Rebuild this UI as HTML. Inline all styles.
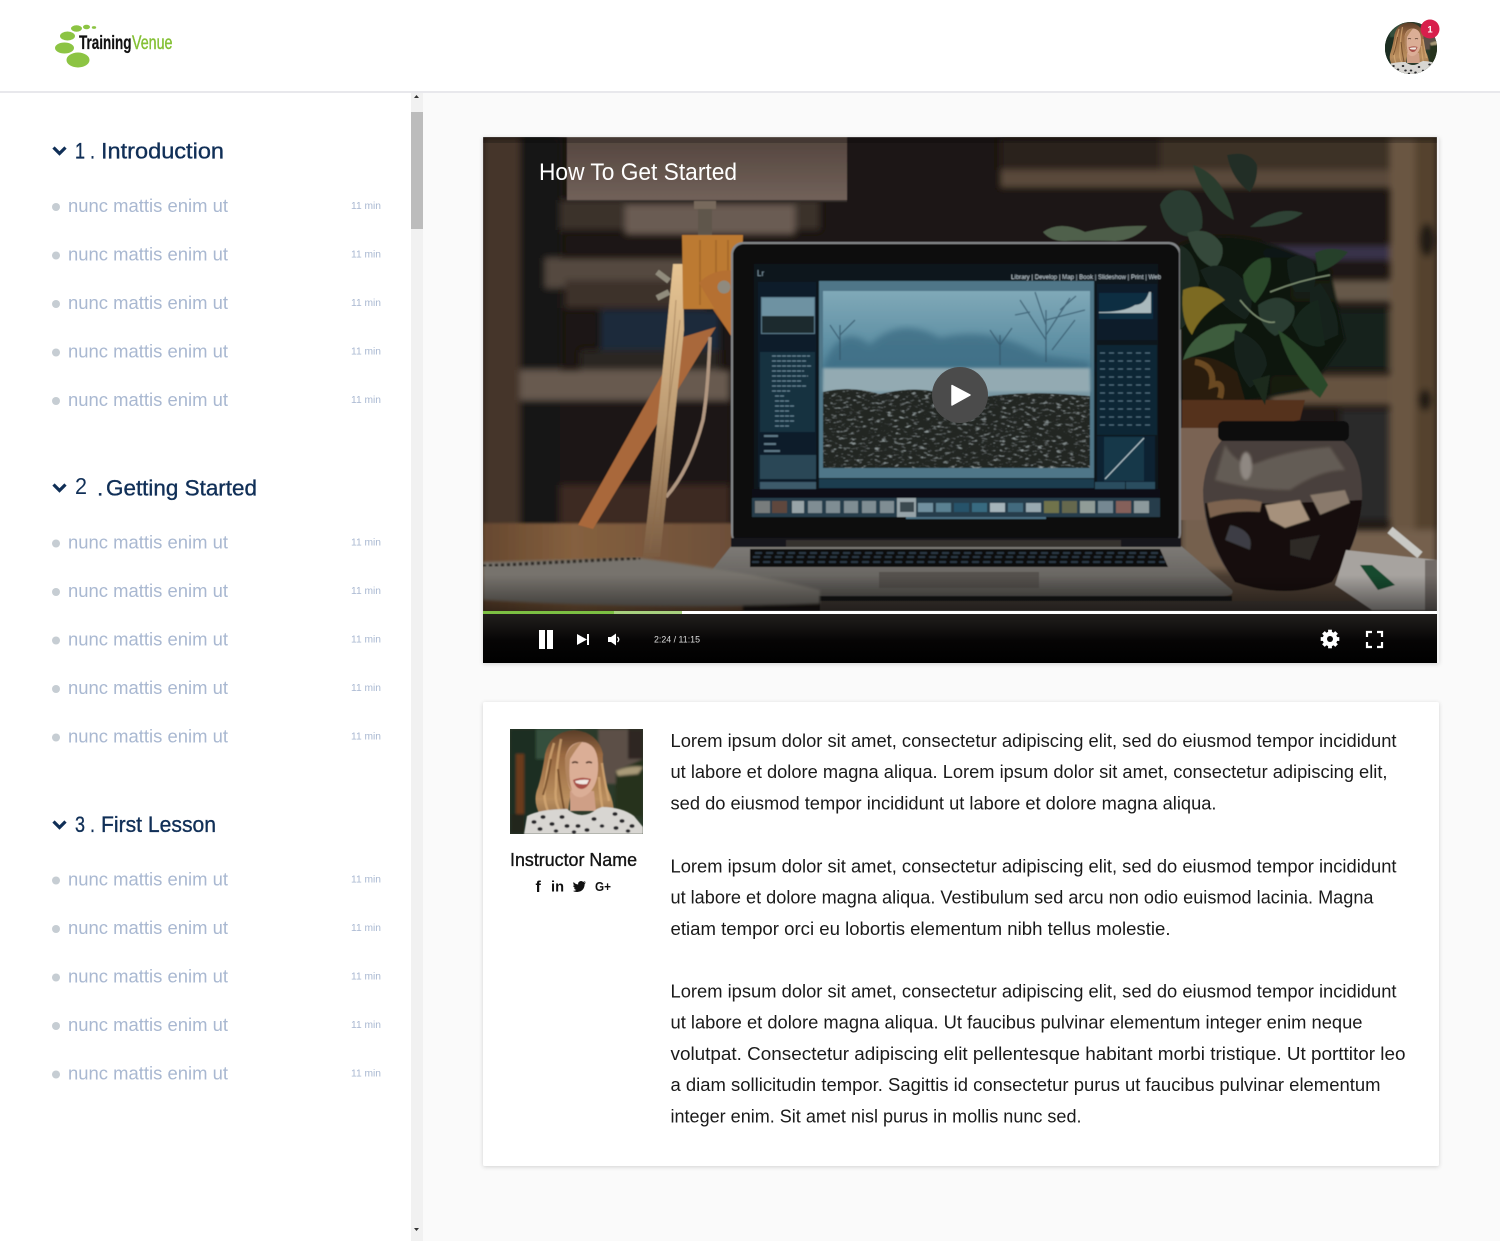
<!DOCTYPE html>
<html lang="en"><head><meta charset="utf-8"><title>TrainingVenue</title>
<style>
html,body{margin:0;padding:0;background:#fff;width:1500px;height:1241px;overflow:hidden}
svg{display:block}
text{font-family:"Liberation Sans",sans-serif}
.li{font-size:18px;fill:#a9b8d1}
.mi{font-size:10px;fill:#a9b8d1}
.h{font-size:22.5px;fill:#102f57;stroke:#102f57;stroke-width:.35}
.p{font-size:18px;fill:#1a1a1a}
</style></head><body>
<svg width="1500" height="1241" viewBox="0 0 1500 1241" xmlns="http://www.w3.org/2000/svg">
<defs>
<filter id="b1" x="-10%" y="-10%" width="120%" height="120%"><feGaussianBlur stdDeviation="3.5"/></filter>
<filter id="b2" x="-10%" y="-10%" width="120%" height="120%"><feGaussianBlur stdDeviation="1.2"/></filter>
<filter id="b3" x="-5%" y="-5%" width="110%" height="110%"><feGaussianBlur stdDeviation=".5"/></filter>
<filter id="sh" x="-3%" y="-3%" width="106%" height="106%"><feDropShadow dx="0" dy="1" stdDeviation="2" flood-color="#000" flood-opacity=".16"/></filter>
<filter id="grass" x="0" y="0" width="1" height="1" color-interpolation-filters="sRGB">
<feTurbulence type="fractalNoise" baseFrequency=".16 .42" numOctaves="4" seed="7" result="n"/>
<feColorMatrix in="n" values="0 0 0 0 .56 0 0 0 0 .6 0 0 0 0 .6 4.5 0 0 0 -2.6" result="c"/>
<feMerge result="m"><feMergeNode in="SourceGraphic"/><feMergeNode in="c"/></feMerge>
<feComposite in="m" in2="SourceAlpha" operator="in"/>
</filter>
<linearGradient id="lamp" x1="0" y1="0" x2="0" y2="1"><stop offset="0" stop-color="#54453e"/><stop offset="1" stop-color="#72625a"/></linearGradient>
<linearGradient id="desk" x1="0" y1="0" x2="1" y2="0"><stop offset="0" stop-color="#66482f"/><stop offset=".35" stop-color="#85603f"/><stop offset="1" stop-color="#6b4e39"/></linearGradient>
<linearGradient id="leg" x1="0" y1="0" x2="0" y2="1"><stop offset="0" stop-color="#e6c493"/><stop offset=".55" stop-color="#bb9a72"/><stop offset="1" stop-color="#7a5c42"/></linearGradient>
<linearGradient id="sky" x1="0" y1="0" x2="0" y2="1"><stop offset="0" stop-color="#80a9b8"/><stop offset=".3" stop-color="#5f90a4"/><stop offset=".48" stop-color="#4f8197"/><stop offset=".6" stop-color="#7f9ba5"/><stop offset="1" stop-color="#7f9ba5"/></linearGradient>
<linearGradient id="fade" x1="0" y1="0" x2="0" y2="1"><stop offset="0" stop-color="#000" stop-opacity="0"/><stop offset="1" stop-color="#000" stop-opacity=".5"/></linearGradient>
<linearGradient id="bar" x1="0" y1="0" x2="0" y2="1"><stop offset="0" stop-color="#221f1d"/><stop offset=".55" stop-color="#060505"/><stop offset="1" stop-color="#000"/></linearGradient>
<linearGradient id="base" x1="0" y1="0" x2="0" y2="1"><stop offset="0" stop-color="#7e7b77"/><stop offset="1" stop-color="#5c5955"/></linearGradient>
<linearGradient id="hair" x1="0" y1="0" x2="0" y2="1"><stop offset="0" stop-color="#5a3d28"/><stop offset=".25" stop-color="#9a6a42"/><stop offset=".7" stop-color="#b98e5e"/><stop offset="1" stop-color="#836244"/></linearGradient>
<clipPath id="vid"><rect x="483" y="137" width="954" height="474"/></clipPath>
<clipPath id="av"><circle cx="1411" cy="48" r="26"/></clipPath>
<clipPath id="inst"><rect x="0" y="0" width="133" height="105"/></clipPath>
<g id="portrait" clip-path="url(#inst)">
<rect width="133" height="105" fill="#2b3a2a"/>
<g filter="url(#b2)">
<rect x="0" y="0" width="40" height="105" fill="#1c2f22"/>
<rect x="6" y="25" width="8" height="60" fill="#6a3a1c"/>
<rect x="26" y="0" width="40" height="30" fill="#34503c"/>
<rect x="88" y="0" width="45" height="55" fill="#5b5046"/>
<rect x="118" y="0" width="15" height="30" fill="#2e2823"/>
<path d="M106 42 L133 30 V88 H105Z" fill="#28331f"/>
<path d="M106 42 Q120 36 133 38 L128 45 Q116 46 108 47Z" fill="#a99a78"/>
<rect x="0" y="85" width="14" height="20" fill="#20281c"/>
</g>
<g filter="url(#b3)">
<path d="M64 1 Q40 3 35 25 Q32 45 28 58 Q22 72 30 86 L58 84 L60 68 L84 68 L88 100 L103 100 Q107 78 98 60 Q92 40 93 25 Q88 3 64 1Z" fill="url(#hair)"/>
<path d="M44 14 Q38 34 36 52 Q32 68 38 82 M51 10 Q46 36 46 58 Q44 72 50 82 M92 34 Q95 54 99 72 M89 48 Q90 70 95 92" stroke="#d8ad78" stroke-width="2.500" fill="none" opacity=".7"/>
<path d="M41 30 Q38 50 33 66 M48 40 Q50 60 54 80" stroke="#6e4726" stroke-width="2" fill="none" opacity=".8"/>
<path d="M60 62 L84 62 L86 82 L60 82Z" fill="#cf9f86"/>
<path d="M14 105 L17 87 Q30 80 57 80 Q72 92 87 80 L92 78 Q112 78 124 87 L133 98 V105Z" fill="#d8d6d2"/>
<g fill="#26272a"><ellipse cx="24" cy="93" rx="2.600" ry="1.900"/><ellipse cx="33" cy="88" rx="2.600" ry="1.900"/><ellipse cx="42" cy="95" rx="2.600" ry="1.900"/><ellipse cx="30" cy="100" rx="2.600" ry="1.900"/><ellipse cx="52" cy="88" rx="2.600" ry="1.900"/><ellipse cx="57" cy="97" rx="2.600" ry="1.900"/><ellipse cx="68" cy="97" rx="2.600" ry="1.900"/><ellipse cx="46" cy="102" rx="2.300" ry="1.800"/><ellipse cx="84" cy="90" rx="2.600" ry="1.900"/><ellipse cx="77" cy="101" rx="2.600" ry="1.900"/><ellipse cx="105" cy="85" rx="2.600" ry="1.900"/><ellipse cx="112" cy="92" rx="2.600" ry="1.900"/><ellipse cx="106" cy="99" rx="2.600" ry="1.900"/><ellipse cx="122" cy="97" rx="2.600" ry="1.900"/><ellipse cx="64" cy="103" rx="2.300" ry="1.800"/><ellipse cx="118" cy="102" rx="2.300" ry="1.800"/><ellipse cx="92" cy="97" rx="2.300" ry="1.800"/></g>
<path d="M55 30 Q58 13 72 13 Q87 14 88 34 Q89 52 81 62 Q72 72 64 66 Q55 56 55 30Z" fill="#dbae96"/>
<path d="M55 30 Q59 14 72 13 Q66 20 60 30 Q58 48 62 62 Q54 50 55 30Z" fill="#a87a50" opacity=".8"/>
<path d="M63 51 Q72 47 81 50 Q78 60 71 60 Q65 59 63 51Z" fill="#a85046"/>
<path d="M65 52 Q72 50 79 51 L77 55 Q71 56 66 54Z" fill="#f0e8e2"/>
<path d="M62 34 Q65 32 68 34 M76 34 Q79 32 82 34" stroke="#5d4032" stroke-width="1.600" fill="none"/>
</g>
</g>
</defs>

<!-- page -->
<rect width="1500" height="1241" fill="#fff"/>
<rect x="423" y="92" width="1077" height="1149" fill="#fafafa"/>
<rect x="0" y="91" width="1500" height="2" fill="#e8e8ec"/>

<!-- logo -->
<g fill="#8cc443">
<ellipse cx="78" cy="60" rx="11.500" ry="7.500"/>
<ellipse cx="64.500" cy="48" rx="9.500" ry="5.500"/>
<ellipse cx="67.500" cy="36" rx="7.500" ry="4.500"/>
<ellipse cx="76.500" cy="28.500" rx="5.500" ry="3.200"/>
<ellipse cx="86.500" cy="27" rx="3.500" ry="2.300"/>
<ellipse cx="94" cy="27.500" rx="2.200" ry="1.400"/>
</g>
<text x="79" y="49" font-size="19.500" font-weight="700" fill="#111" textLength="52.500" lengthAdjust="spacingAndGlyphs" stroke="#111" stroke-width=".2">Training</text>
<text x="132" y="49" font-size="19.500" fill="#84c034" stroke="#84c034" stroke-width=".4" textLength="40.500" lengthAdjust="spacingAndGlyphs">Venue</text>

<!-- avatar -->
<g clip-path="url(#av)"><rect x="1385" y="22" width="52" height="52" fill="#2b3a2a"/><use href="#portrait" transform="translate(1377 22) scale(.5)"/></g>
<circle cx="1430" cy="29" r="9.500" fill="#d81f4c"/>
<text x="1430" y="32.500" font-size="9.500" font-weight="700" fill="#fff" text-anchor="middle">1</text>

<!-- scrollbar -->
<rect x="411" y="93" width="12" height="1148" fill="#f1f1f1"/>
<rect x="411" y="112" width="12" height="117" fill="#bcbcbc"/>
<path d="M414 98 L416.500 95 L419 98Z" fill="#333"/>
<path d="M414 1228 L416.500 1231 L419 1228Z" fill="#333"/>

<!-- sidebar section 1 -->
<path d="M53.500 147.500 L59.500 153.500 L65.500 147.500" stroke="#102f57" stroke-width="3.200" fill="none"/>
<text class="h" x="75" y="158.500" textLength="20" lengthAdjust="spacingAndGlyphs">1 .</text>
<text class="h" x="101" y="158.500" textLength="123" lengthAdjust="spacingAndGlyphs">Introduction</text>
<g fill="#c6cdd3"><circle cx="56" cy="207" r="4"/><circle cx="56" cy="255.500" r="4"/><circle cx="56" cy="304" r="4"/><circle cx="56" cy="352.500" r="4"/><circle cx="56" cy="401" r="4"/></g>
<text class="li" x="68" y="212" textLength="160" lengthAdjust="spacingAndGlyphs">nunc mattis enim ut</text>
<text class="li" x="68" y="260.500" textLength="160" lengthAdjust="spacingAndGlyphs">nunc mattis enim ut</text>
<text class="li" x="68" y="309" textLength="160" lengthAdjust="spacingAndGlyphs">nunc mattis enim ut</text>
<text class="li" x="68" y="357.500" textLength="160" lengthAdjust="spacingAndGlyphs">nunc mattis enim ut</text>
<text class="li" x="68" y="406" textLength="160" lengthAdjust="spacingAndGlyphs">nunc mattis enim ut</text>
<text class="mi" x="351" y="209" textLength="30" lengthAdjust="spacingAndGlyphs">11 min</text>
<text class="mi" x="351" y="257.500" textLength="30" lengthAdjust="spacingAndGlyphs">11 min</text>
<text class="mi" x="351" y="306" textLength="30" lengthAdjust="spacingAndGlyphs">11 min</text>
<text class="mi" x="351" y="354.500" textLength="30" lengthAdjust="spacingAndGlyphs">11 min</text>
<text class="mi" x="351" y="403" textLength="30" lengthAdjust="spacingAndGlyphs">11 min</text>

<!-- sidebar section 2 -->
<path d="M53.500 484.500 L59.500 490.500 L65.500 484.500" stroke="#102f57" stroke-width="3.200" fill="none"/>
<text x="75" y="494" font-size="23" fill="#102f57" textLength="12" lengthAdjust="spacingAndGlyphs">2</text>
<text class="h" x="97" y="495.500" textLength="5">.</text>
<text class="h" x="106" y="495.500" textLength="151" lengthAdjust="spacingAndGlyphs">Getting Started</text>
<g fill="#c6cdd3"><circle cx="56" cy="543.500" r="4"/><circle cx="56" cy="592" r="4"/><circle cx="56" cy="640.500" r="4"/><circle cx="56" cy="689" r="4"/><circle cx="56" cy="737.500" r="4"/></g>
<text class="li" x="68" y="548.500" textLength="160" lengthAdjust="spacingAndGlyphs">nunc mattis enim ut</text>
<text class="li" x="68" y="597" textLength="160" lengthAdjust="spacingAndGlyphs">nunc mattis enim ut</text>
<text class="li" x="68" y="645.500" textLength="160" lengthAdjust="spacingAndGlyphs">nunc mattis enim ut</text>
<text class="li" x="68" y="694" textLength="160" lengthAdjust="spacingAndGlyphs">nunc mattis enim ut</text>
<text class="li" x="68" y="742.500" textLength="160" lengthAdjust="spacingAndGlyphs">nunc mattis enim ut</text>
<text class="mi" x="351" y="545.500" textLength="30" lengthAdjust="spacingAndGlyphs">11 min</text>
<text class="mi" x="351" y="594" textLength="30" lengthAdjust="spacingAndGlyphs">11 min</text>
<text class="mi" x="351" y="642.500" textLength="30" lengthAdjust="spacingAndGlyphs">11 min</text>
<text class="mi" x="351" y="691" textLength="30" lengthAdjust="spacingAndGlyphs">11 min</text>
<text class="mi" x="351" y="739.500" textLength="30" lengthAdjust="spacingAndGlyphs">11 min</text>

<!-- sidebar section 3 -->
<path d="M53.500 821.500 L59.500 827.500 L65.500 821.500" stroke="#102f57" stroke-width="3.200" fill="none"/>
<text class="h" x="75" y="832" textLength="20" lengthAdjust="spacingAndGlyphs">3 .</text>
<text class="h" x="101" y="832" textLength="115" lengthAdjust="spacingAndGlyphs">First Lesson</text>
<g fill="#c6cdd3"><circle cx="56" cy="880.500" r="4"/><circle cx="56" cy="929" r="4"/><circle cx="56" cy="977.500" r="4"/><circle cx="56" cy="1026" r="4"/><circle cx="56" cy="1074.500" r="4"/></g>
<text class="li" x="68" y="885.500" textLength="160" lengthAdjust="spacingAndGlyphs">nunc mattis enim ut</text>
<text class="li" x="68" y="934" textLength="160" lengthAdjust="spacingAndGlyphs">nunc mattis enim ut</text>
<text class="li" x="68" y="982.500" textLength="160" lengthAdjust="spacingAndGlyphs">nunc mattis enim ut</text>
<text class="li" x="68" y="1031" textLength="160" lengthAdjust="spacingAndGlyphs">nunc mattis enim ut</text>
<text class="li" x="68" y="1079.500" textLength="160" lengthAdjust="spacingAndGlyphs">nunc mattis enim ut</text>
<text class="mi" x="351" y="882.500" textLength="30" lengthAdjust="spacingAndGlyphs">11 min</text>
<text class="mi" x="351" y="931" textLength="30" lengthAdjust="spacingAndGlyphs">11 min</text>
<text class="mi" x="351" y="979.500" textLength="30" lengthAdjust="spacingAndGlyphs">11 min</text>
<text class="mi" x="351" y="1028" textLength="30" lengthAdjust="spacingAndGlyphs">11 min</text>
<text class="mi" x="351" y="1076.500" textLength="30" lengthAdjust="spacingAndGlyphs">11 min</text>

<!-- video -->
<rect x="483" y="137" width="956" height="526" fill="#fff" filter="url(#sh)"/>
<g clip-path="url(#vid)">
<g filter="url(#b3)">
<rect x="483" y="137" width="954" height="474" fill="#1c1612"/>
<g filter="url(#b1)">
<rect x="483" y="137" width="37" height="400" fill="#44342a"/>
<rect x="520" y="137" width="40" height="400" fill="#191512"/>
<rect x="560" y="200" width="260" height="30" fill="#3b302b"/>
<rect x="625" y="205" width="170" height="30" fill="#6a5b52"/>
<rect x="545" y="258" width="170" height="30" fill="#54483f"/>
<rect x="565" y="280" width="140" height="28" fill="#3e332a"/>
<rect x="600" y="310" width="120" height="40" fill="#1c2a3a"/>
<rect x="580" y="350" width="140" height="30" fill="#2a2622"/>
<rect x="520" y="370" width="210" height="30" fill="#675a50"/>
<rect x="560" y="400" width="170" height="120" fill="#1d1612"/>
<rect x="560" y="485" width="170" height="40" fill="#3c2c20"/>
<!-- right background -->
<rect x="1160" y="137" width="230" height="40" fill="#3c3026"/>
<rect x="1000" y="137" width="160" height="40" fill="#2a221c"/>
<rect x="1000" y="170" width="390" height="18" fill="#5a4a3a"/>
<rect x="1260" y="245" width="130" height="16" fill="#37304a"/>
<rect x="1290" y="280" width="100" height="22" fill="#665849"/>
<rect x="1300" y="310" width="90" height="60" fill="#16211e"/>
<rect x="1270" y="375" width="120" height="30" fill="#66533f"/>
<rect x="1180" y="430" width="60" height="120" fill="#75604f"/>
<rect x="1340" y="410" width="55" height="110" fill="#2c2a2b"/>
<rect x="1390" y="137" width="47" height="420" fill="#6a5642"/>
<rect x="1415" y="137" width="22" height="420" fill="#54422f"/>
<ellipse cx="1427" cy="240" rx="8" ry="17" fill="#231a14"/>
<ellipse cx="1425" cy="400" rx="7" ry="11" fill="#231a14"/>
<rect x="1180" y="530" width="257" height="40" fill="#75604e"/>
<rect x="1200" y="570" width="237" height="40" fill="#4b3d33"/>
</g>
<!-- desk -->
<rect x="483" y="523" width="260" height="90" fill="url(#desk)" filter="url(#b2)"/>
<!-- lamp -->
<rect x="567" y="137" width="280" height="64" fill="url(#lamp)"/>
<rect x="567" y="200" width="280" height="2" fill="#362d2b"/>
<rect x="694" y="201" width="22" height="8" fill="#77695c"/>
<rect x="698" y="209" width="14" height="27" fill="#5e564c"/>
<!-- legs -->
<path d="M683 337 L716 327 L593 529 L578 525Z" fill="#a9673a"/>
<path d="M696 285 L730 334 L737 320 L735 285Z" fill="#b06a2e"/>
<path d="M710 337 Q708 390 703 420 Q690 470 666 497" stroke="#b09680" stroke-width="3.500" fill="none"/>
<path d="M673 264 L683 264 L684 330 L660 557 L643 557 Q660 400 673 264Z" fill="url(#leg)"/>
<path d="M676 300 L660 520 M680 320 L650 550" stroke="#8c6a48" stroke-width="1.200" opacity=".45"/>
<path d="M682 235 H743 L741 309 L683 309Z" fill="#bc7a33"/>
<path d="M700 240 V305 M716 240 V305 M728 240 V300" stroke="#9d6226" stroke-width="2" opacity=".6"/>
<path d="M699 283 Q715 266 743 272 V330 L731 336Z" fill="#b56f30"/>
<circle cx="724" cy="287" r="6.500" fill="#8f8a7e"/>
<path d="M657 272 L669 281 M657 298 L669 292" stroke="#918c7d" stroke-width="6"/>
<!-- laptop base -->
<path d="M732 545 H1180 L1232 590 Q1235 596 1222 596 H730 L700 585Z" fill="url(#base)"/>
<path d="M820 596 H1232 V601 H820Z" fill="#141312"/>
<rect x="820" y="601" width="617" height="10" fill="#443c37"/>
<path d="M750 549 H1160 L1168 567 H750Z" fill="#08090c"/>
<path d="M755 553 H1160 M753 557 H1163 M752 562 H1165" stroke="#2b3744" stroke-width="2" stroke-dasharray="7 4"/>
<rect x="879" y="572" width="160" height="16" fill="#55514e"/>
<!-- notebook -->
<path d="M483 562 L640 558 Q740 570 820 590 L820 604 Q650 610 483 600Z" fill="#77736d" filter="url(#b2)"/>
<path d="M483 566 L640 558" stroke="#2a2622" stroke-width="3" stroke-dasharray="3 3" filter="url(#b3)"/>
<!-- laptop body -->
<rect x="731" y="242" width="450" height="303" rx="12" fill="#85878a"/>
<rect x="733" y="244" width="446" height="301" rx="11" fill="#08090b"/>
<rect x="731" y="538" width="450" height="9" fill="#14171a"/>
<rect x="786" y="540" width="335" height="7" fill="#34322f"/>
<!-- screen UI -->
<rect x="754" y="264" width="404" height="250" fill="#0a151e"/>
<rect x="758" y="282" width="58" height="205" fill="#0d1f2b"/>
<rect x="761" y="297" width="54" height="37" fill="#58798a"/>
<rect x="762" y="298" width="52" height="18" fill="#6e92a2"/>
<rect x="762" y="316" width="52" height="17" fill="#1f2a2d"/>
<rect x="760" y="352" width="55" height="80" fill="#12303f"/>
<path d="M772 356 H810 M772 361 H806 M772 366 H812 M772 371 H804 M772 376 H808 M772 381 H802 M772 386 H806 M772 391 H790 M775 396 H785 M775 401 H790 M775 406 H795 M775 411 H790 M775 416 H795 M775 421 H795 M775 426 H790" stroke="#7d99a8" stroke-width="1.200" stroke-dasharray="4 1" opacity=".8"/>
<path d="M764 436 H778 M764 444 H776 M764 451 H780" stroke="#5d7886" stroke-width="2"/>
<rect x="760" y="455" width="56" height="24" fill="#2b4757"/>
<rect x="760" y="482" width="29" height="7" fill="#3c5a6b"/>
<rect x="788" y="482" width="28" height="7" fill="#3c5a6b"/>
<rect x="819" y="281" width="275" height="197" fill="#4f7688"/>
<rect x="819" y="479" width="275" height="9" fill="#1f3d4f"/>
<rect x="823" y="291" width="267" height="177" fill="url(#sky)"/>
<path d="M823 368 Q840 320 870 345 Q900 315 940 338 Q990 325 1040 355 L1090 362 V372 H823Z" fill="#3a6b82" opacity=".75" filter="url(#b1)"/>
<rect x="823" y="368" width="267" height="24" fill="#93aab2" filter="url(#b2)"/>
<path d="M1046 362 V310 M1046 340 L1020 300 M1046 335 L1070 298 M1046 325 L1035 292 M1046 320 L1085 310 M1030 312 L1015 315 M1060 310 L1076 296 M1052 350 L1075 320 M840 360 V325 M840 340 L830 325 M840 335 L855 320 M1000 365 V335 M1000 345 L990 330 M1000 345 L1012 328" stroke="#34566a" stroke-width="1.300" fill="none" opacity=".75"/>
<path d="M823 468 V392 Q850 385 880 394 Q930 382 960 402 Q1010 388 1090 396 V468Z" fill="#232524" filter="url(#grass)"/>
<!-- right panel -->
<rect x="1097" y="284" width="60" height="56" fill="#0d1f2b"/>
<rect x="1099" y="293" width="54" height="26" fill="#0d2f42"/>
<path d="M1099 312 Q1125 312 1135 305 Q1145 305 1149 292 L1151 292 V313 H1099Z" fill="#a9b9bd"/>
<rect x="1097" y="345" width="60" height="90" fill="#0d2634"/>
<path d="M1100 353 H1150 M1100 361 H1150 M1100 369 H1150 M1100 377 H1150 M1100 385 H1150 M1100 393 H1150 M1100 401 H1150 M1100 409 H1150 M1100 417 H1150 M1100 425 H1150" stroke="#4f6d7d" stroke-width="1.200" stroke-dasharray="5 4"/>
<rect x="1097" y="436" width="58" height="48" fill="#0a2433"/>
<rect x="1104" y="437" width="40" height="44" fill="#17384a"/>
<path d="M1105 479 L1144 438" stroke="#b5c6cc" stroke-width="1.200"/>
<rect x="1095" y="482" width="30" height="7" fill="#2c4d5f"/>
<rect x="1126" y="482" width="29" height="7" fill="#2c4d5f"/>
<text x="1011" y="279" font-size="6" fill="#c6d3da" textLength="150" lengthAdjust="spacingAndGlyphs">Library | Develop | Map | Book | Slideshow | Print | Web</text>
<text x="757" y="276" font-size="8" fill="#88a0ae">Lr</text>
<!-- filmstrip -->
<rect x="752" y="498" width="408" height="19" fill="#263e4c"/>
<g fill="#7f8d93">
<rect x="755" y="501" width="15" height="12" fill="#787c7b"/><rect x="772" y="501" width="15" height="12" fill="#5e463c"/><rect x="792" y="501" width="12" height="12" fill="#98a4a8"/>
<rect x="808" y="501" width="14" height="12"/><rect x="826" y="501" width="14" height="12"/><rect x="844" y="501" width="14" height="12"/><rect x="862" y="501" width="14" height="12"/><rect x="880" y="501" width="14" height="12"/>
<rect x="897" y="498" width="19" height="19" fill="#97a4a9"/><rect x="900" y="502" width="14" height="10" fill="#3b4a4f"/>
<rect x="918" y="503" width="15" height="9" fill="#71909f"/><rect x="936" y="503" width="15" height="9" fill="#5a8192"/><rect x="954" y="503" width="15" height="9" fill="#28536a"/><rect x="972" y="503" width="15" height="9" fill="#386a80"/><rect x="990" y="503" width="15" height="9" fill="#a5b4ba"/><rect x="1008" y="503" width="15" height="9" fill="#426a7e"/><rect x="1026" y="503" width="15" height="9" fill="#98a9b0"/>
<rect x="1044" y="501" width="15" height="12" fill="#6f734c"/><rect x="1062" y="501" width="15" height="12" fill="#65684e"/><rect x="1080" y="501" width="15" height="12" fill="#909c97"/><rect x="1098" y="501" width="15" height="12" fill="#748892"/><rect x="1116" y="501" width="15" height="12" fill="#85605a"/><rect x="1134" y="501" width="15" height="12" fill="#8c999c"/>
</g>
<rect x="752" y="489" width="408" height="8" fill="#081018"/>
<rect x="906" y="517" width="140" height="2" fill="#4b7184"/>
<!-- plant back leaves -->
<path d="M1043 232 Q1060 220 1085 232 Q1115 225 1147 226 Q1135 240 1115 241 Q1085 240 1065 241 Q1050 241 1043 232Z" fill="#50604c"/>
<!-- pot + root -->
<path d="M1181 245 Q1240 220 1330 270 L1345 340 L1310 390 L1250 400 L1182 400Z" fill="#10160f" opacity=".9" filter="url(#b2)"/>
<path d="M1182 360 Q1210 350 1237 372 L1245 400 H1183Z" fill="#2a1c10"/>
<path d="M1195 362 Q1215 365 1212 385 Q1225 380 1220 398" stroke="#6a4a24" stroke-width="6" fill="none"/>
<path d="M1182 400 H1305 L1300 420 Q1240 432 1182 428Z" fill="#54301f"/>
<path d="M1181 428 H1220 V520 H1181Z" fill="#7a6352"/>
<!-- leaves -->
<g>
<path d="M1227 155 Q1250 150 1257 165 Q1258 180 1250 192 Q1232 180 1227 155Z" fill="#212f25"/>
<path d="M1193 165 Q1225 175 1234 220 Q1205 205 1193 165Z" fill="#2a3c2e"/>
<path d="M1160 205 Q1170 185 1190 192 Q1205 205 1202 228 L1192 237 Q1165 235 1160 205Z" fill="#2c3e33"/>
<path d="M1250 227 Q1275 205 1303 213 Q1285 227 1250 227Z" fill="#2e4235"/>
<path d="M1187 233 Q1210 225 1222 245 Q1225 258 1215 268 Q1195 262 1187 233Z" fill="#364a3a"/>
<path d="M1180 245 Q1195 250 1200 280 L1190 320 L1180 330Z" fill="#1c2a20"/>
<path d="M1200 270 Q1230 255 1250 290 Q1255 310 1245 320 Q1215 305 1200 270Z" fill="#14201a"/>
<path d="M1183 290 Q1205 280 1225 300 Q1200 315 1192 335 Q1180 320 1183 290Z" fill="#7c6a22"/>
<path d="M1243 275 Q1255 255 1270 258 Q1275 280 1255 303 Q1245 295 1243 275Z" fill="#2a4a2c"/>
<path d="M1287 260 Q1300 250 1313 262 Q1318 275 1313 292 L1295 292 Q1287 280 1287 260Z" fill="#13201a"/>
<path d="M1315 253 Q1330 245 1348 252 Q1335 268 1318 272Z" fill="#26402c"/>
<path d="M1310 290 L1320 283 Q1340 310 1338 335 L1322 342 Q1308 320 1310 290Z" fill="#14241a"/>
<path d="M1258 305 Q1280 290 1294 306 Q1298 325 1275 336 Q1258 325 1258 305Z" fill="#2a3d33"/>
<path d="M1292 325 Q1300 305 1318 300 L1325 345 Q1315 350 1300 340Z" fill="#13281a"/>
<path d="M1183 360 Q1190 335 1220 325 Q1240 323 1247 324 Q1235 345 1215 350 Q1195 355 1183 360Z" fill="#3e5c3d"/>
<path d="M1235 330 Q1265 340 1267 365 Q1262 380 1250 388 Q1230 365 1235 330Z" fill="#13201a"/>
<path d="M1278 330 Q1310 350 1328 385 L1320 398 Q1290 375 1278 330Z" fill="#2b4a2b"/>
<path d="M1252 380 L1270 375 L1265 405 Z" fill="#1a2a1e"/>
<path d="M1240 300 Q1260 325 1275 322 M1270 292 Q1300 280 1330 275" stroke="#7a8c70" stroke-width="1.500" fill="none"/>
</g>
<!-- jar -->
<path d="M1222 440 Q1205 460 1203 490 Q1203 540 1235 582 Q1285 600 1332 582 Q1362 540 1362 495 Q1362 455 1342 440Z" fill="#4a413d"/>
<path d="M1225 445 Q1240 470 1260 462 Q1290 450 1330 447 L1345 470 Q1320 470 1290 490 Q1250 490 1215 480Z" fill="#645b55" filter="url(#b2)"/>
<ellipse cx="1246" cy="466" rx="6" ry="14" fill="#8f8882" filter="url(#b2)"/>
<path d="M1205 503 Q1260 505 1362 500 Q1360 540 1332 582 Q1285 600 1235 582 Q1207 540 1205 503Z" fill="#15110e"/>
<g filter="url(#b3)"><path d="M1207 503 Q1240 496 1262 502 L1260 512 Q1230 510 1210 518Z" fill="#7d6450"/><path d="M1265 505 L1300 500 L1310 520 L1285 528 L1270 520Z" fill="#a6917b"/><path d="M1310 495 L1345 490 L1350 503 L1320 515Z" fill="#8a7a6c"/><path d="M1230 525 Q1255 530 1250 550 L1225 540Z" fill="#3c3e45"/><path d="M1290 540 L1320 535 L1310 560 L1290 555Z" fill="#2d2a28"/></g>
<rect x="1218" y="421" width="131" height="20" rx="6" fill="#0c0c0d"/>
<!-- box -->
<path d="M1346 550 L1437 560 V610 H1372 L1335 585Z" fill="#a7a39f"/>
<path d="M1360 565 L1378 590 L1395 585 L1372 565Z" fill="#14482f"/>
<path d="M1390 530 L1420 555" stroke="#c9c9c5" stroke-width="8"/>
<rect x="1425" y="560" width="12" height="50" fill="#716b66"/>
</g>
<!-- overlays -->
<rect x="483" y="575" width="954" height="36" fill="url(#fade)"/>
<rect x="483" y="137" width="954" height="6" fill="#000" opacity=".2"/>
</g>
<rect x="1437" y="137" width="2" height="526" fill="#f4f4f4"/>
<text x="539" y="180" font-size="24" fill="#fff" textLength="198" lengthAdjust="spacingAndGlyphs">How To Get Started</text>
<!-- play -->
<circle cx="960" cy="395" r="28" fill="#4b4b4b"/>
<path d="M952 385.500 L970 395 L952 405Z" fill="#fff" stroke="#fff" stroke-width="1.500" stroke-linejoin="round"/>
<!-- progress -->
<rect x="483" y="611" width="954" height="3" fill="#fff"/>
<rect x="483" y="611" width="199" height="3" fill="#a8d17f"/>
<rect x="483" y="611" width="131" height="3" fill="#7cc043"/>
<!-- control bar -->
<rect x="483" y="614" width="954" height="49" fill="url(#bar)"/>
<rect x="539" y="630" width="6" height="19" fill="#fff"/><rect x="547" y="630" width="6" height="19" fill="#fff"/>
<path d="M577 634 L587 639.500 L577 645Z" fill="#fff"/><rect x="587" y="634" width="2" height="11" fill="#fff"/>
<path d="M608 637 H611 L616 633.500 V645.500 L611 642 H608Z" fill="#fff"/><path d="M617.500 637 Q620 639.500 617.500 642" stroke="#fff" stroke-width="1.300" fill="none"/>
<text x="654" y="642.500" font-size="9.500" fill="#dedede" textLength="46" lengthAdjust="spacingAndGlyphs">2:24 / 11:15</text>
<g transform="translate(1330 639)" fill="#fff">
<circle r="5.500" fill="none" stroke="#fff" stroke-width="3.600"/>
<rect x="-1.900" y="-9.300" width="3.800" height="18.600"/><rect x="-1.900" y="-9.300" width="3.800" height="18.600" transform="rotate(45)"/><rect x="-1.900" y="-9.300" width="3.800" height="18.600" transform="rotate(90)"/><rect x="-1.900" y="-9.300" width="3.800" height="18.600" transform="rotate(135)"/>
<circle r="3" fill="#060606"/>
</g>
<path d="M1367 637 V632 H1372 M1377 632 H1382 V637 M1382 642 V647 H1377 M1372 647 H1367 V642" stroke="#fff" stroke-width="2.200" fill="none"/>

<!-- card -->
<rect x="483" y="702" width="956" height="464" rx="2" fill="#fff" filter="url(#sh)"/>
<use href="#portrait" transform="translate(510 729)"/>
<text x="510" y="866" font-size="18" fill="#141414" textLength="127" lengthAdjust="spacingAndGlyphs" stroke="#141414" stroke-width=".35">Instructor Name</text>
<text x="535.500" y="892" font-size="16" font-weight="700" fill="#111">f</text>
<text x="551" y="891.500" font-size="14.500" font-weight="700" fill="#111" textLength="13" lengthAdjust="spacingAndGlyphs">in</text>
<path d="M586 882.300 Q584.800 882.900 583.800 883 Q585 882.300 585.400 881 Q584.200 881.700 583.100 881.900 A2.900 2.900 0 0 0 578.200 884.500 Q575.500 884.400 573.600 882 Q572.700 884.200 574.500 885.800 Q573.700 885.800 573.100 885.400 Q573.200 887.400 575.300 888 Q574.600 888.200 574 888 Q574.600 889.700 576.400 889.900 Q574.900 891.100 572.800 890.900 Q575 892.200 577.400 892 Q584.300 891.400 584.700 884 Q585.500 883.300 586 882.300Z" fill="#111"/>
<text x="595" y="891" font-size="12.500" font-weight="700" fill="#111" textLength="16" lengthAdjust="spacingAndGlyphs">G+</text>

<text class="p" x="670.500" y="747" textLength="726" lengthAdjust="spacingAndGlyphs">Lorem ipsum dolor sit amet, consectetur adipiscing elit, sed do eiusmod tempor incididunt</text>
<text class="p" x="670.500" y="778" textLength="717" lengthAdjust="spacingAndGlyphs">ut labore et dolore magna aliqua. Lorem ipsum dolor sit amet, consectetur adipiscing elit,</text>
<text class="p" x="670.500" y="809.500" textLength="546" lengthAdjust="spacingAndGlyphs">sed do eiusmod tempor incididunt ut labore et dolore magna aliqua.</text>
<text class="p" x="670.500" y="872.500" textLength="726" lengthAdjust="spacingAndGlyphs">Lorem ipsum dolor sit amet, consectetur adipiscing elit, sed do eiusmod tempor incididunt</text>
<text class="p" x="670.500" y="903.500" textLength="703" lengthAdjust="spacingAndGlyphs">ut labore et dolore magna aliqua. Vestibulum sed arcu non odio euismod lacinia. Magna</text>
<text class="p" x="670.500" y="935" textLength="500" lengthAdjust="spacingAndGlyphs">etiam tempor orci eu lobortis elementum nibh tellus molestie.</text>
<text class="p" x="670.500" y="997.500" textLength="726" lengthAdjust="spacingAndGlyphs">Lorem ipsum dolor sit amet, consectetur adipiscing elit, sed do eiusmod tempor incididunt</text>
<text class="p" x="670.500" y="1028.500" textLength="692" lengthAdjust="spacingAndGlyphs">ut labore et dolore magna aliqua. Ut faucibus pulvinar elementum integer enim neque</text>
<text class="p" x="670.500" y="1060" textLength="735" lengthAdjust="spacingAndGlyphs">volutpat. Consectetur adipiscing elit pellentesque habitant morbi tristique. Ut porttitor leo</text>
<text class="p" x="670.500" y="1091" textLength="710" lengthAdjust="spacingAndGlyphs">a diam sollicitudin tempor. Sagittis id consectetur purus ut faucibus pulvinar elementum</text>
<text class="p" x="670.500" y="1122.500" textLength="411" lengthAdjust="spacingAndGlyphs">integer enim. Sit amet nisl purus in mollis nunc sed.</text>
</svg>
</body></html>
